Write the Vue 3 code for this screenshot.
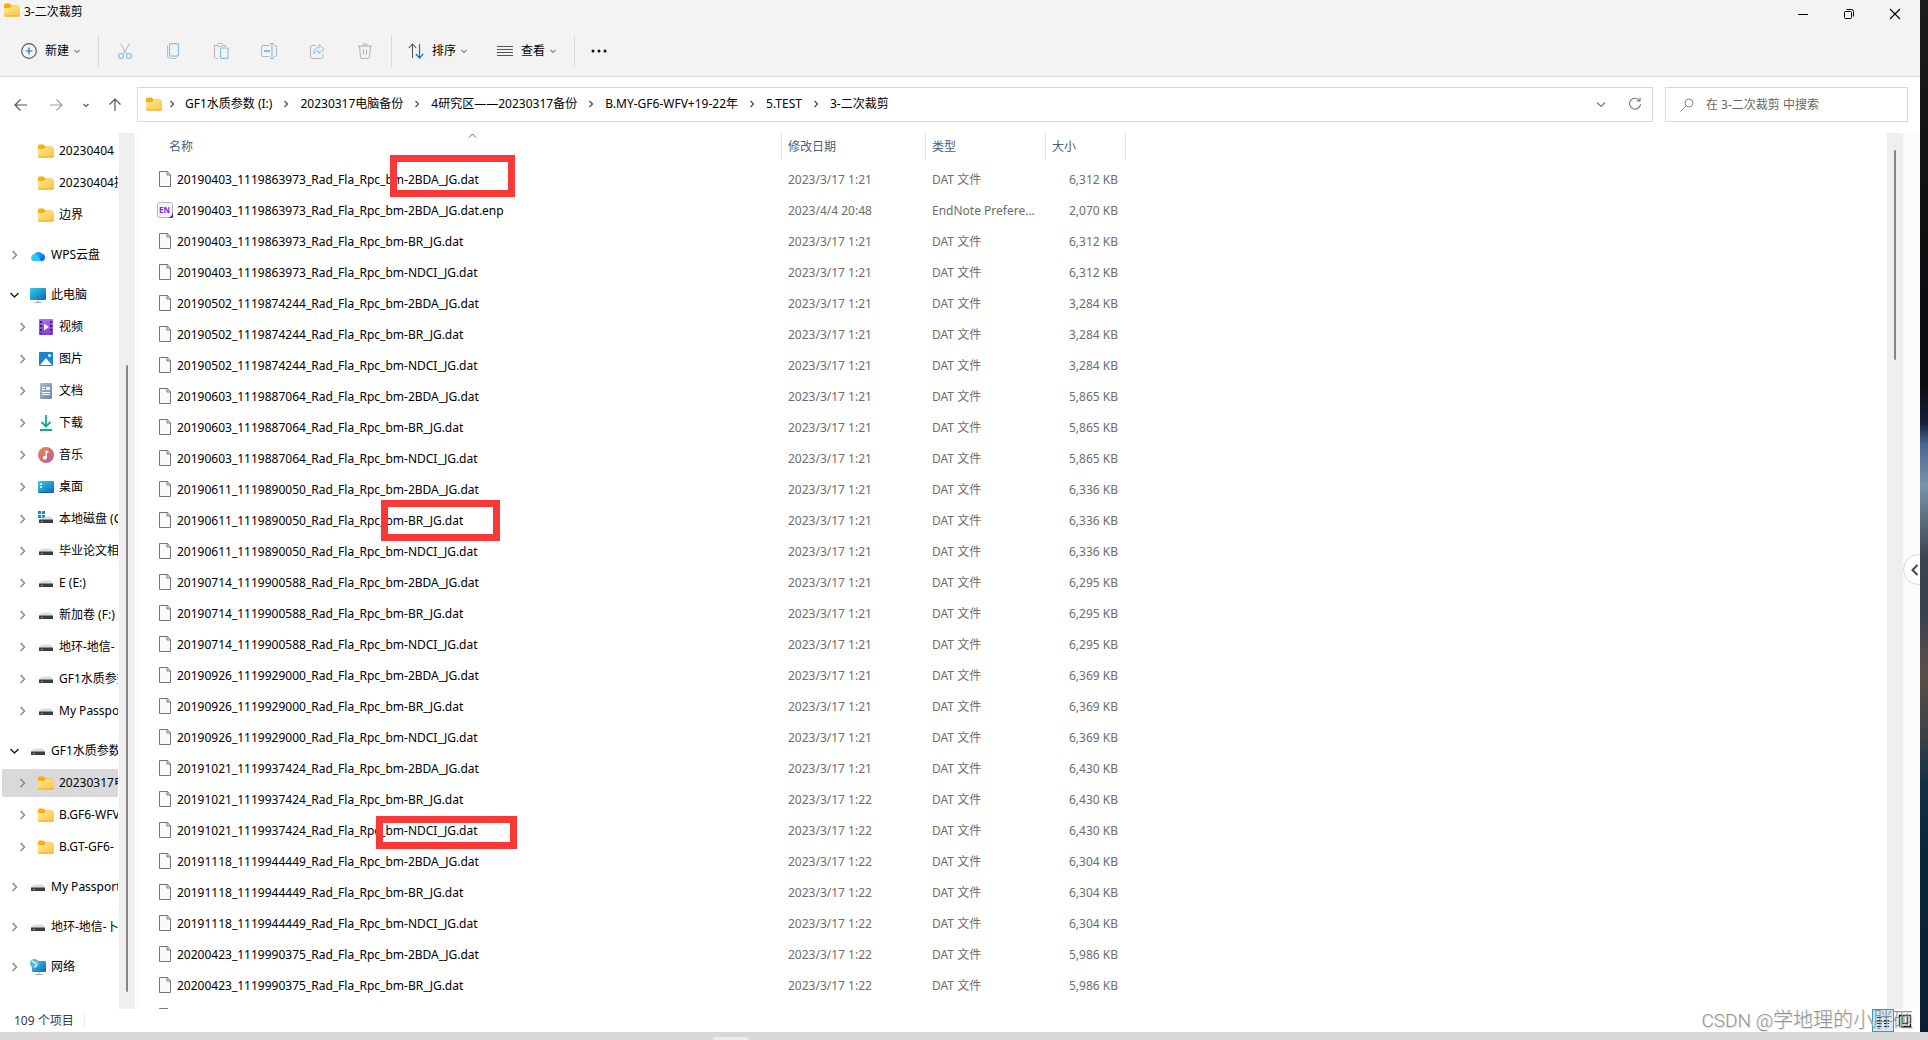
<script setup>
import { ref } from 'vue'

const search = ref('')

const tools = [
  { icon: 'cut', label: '剪切' },
  { icon: 'copy', label: '复制' },
  { icon: 'paste', label: '粘贴' },
  { icon: 'rename', label: '重命名' },
  { icon: 'share', label: '共享' },
  { icon: 'trash', label: '删除' }
]

const crumbs = [
  'GF1水质参数 (I:)',
  '20230317电脑备份',
  '4研究区——20230317备份',
  'B.MY-GF6-WFV+19-22年',
  '5.TEST',
  '3-二次裁剪'
]

const tree = [
  [
    { label: '20230404', icon: 'folder', child: true },
    { label: '20230404提取', icon: 'folder', child: true },
    { label: '边界', icon: 'folder', child: true }
  ],
  [{ label: 'WPS云盘', icon: 'cloud', arrow: 'right' }],
  [
    { label: '此电脑', icon: 'pc', arrow: 'down' },
    { label: '视频', icon: 'video', child: true, arrow: 'right' },
    { label: '图片', icon: 'picture', child: true, arrow: 'right' },
    { label: '文档', icon: 'doc', child: true, arrow: 'right' },
    { label: '下载', icon: 'download', child: true, arrow: 'right' },
    { label: '音乐', icon: 'music', child: true, arrow: 'right' },
    { label: '桌面', icon: 'desktop', child: true, arrow: 'right' },
    { label: '本地磁盘 (C:)', icon: 'sysdrive', child: true, arrow: 'right' },
    { label: '毕业论文相关', icon: 'drive', child: true, arrow: 'right' },
    { label: 'E (E:)', icon: 'drive', child: true, arrow: 'right' },
    { label: '新加卷 (F:)', icon: 'drive', child: true, arrow: 'right' },
    { label: '地环-地信-', icon: 'drive', child: true, arrow: 'right' },
    { label: 'GF1水质参数 (I:)', icon: 'drive', child: true, arrow: 'right' },
    { label: 'My Passport', icon: 'drive', child: true, arrow: 'right' }
  ],
  [
    { label: 'GF1水质参数 (I:)', icon: 'drive', arrow: 'down' },
    { label: '20230317电脑备份', icon: 'folder', child: true, arrow: 'right', selected: true },
    { label: 'B.GF6-WFV', icon: 'folder', child: true, arrow: 'right' },
    { label: 'B.GT-GF6-', icon: 'folder', child: true, arrow: 'right' }
  ],
  [{ label: 'My Passport', icon: 'drive', arrow: 'right' }],
  [{ label: '地环-地信-卜', icon: 'drive', arrow: 'right' }],
  [{ label: '网络', icon: 'network', arrow: 'right' }]
]

const scenes = [
  ['20190403_1119863973', '6,312'],
  ['20190502_1119874244', '3,284'],
  ['20190603_1119887064', '5,865'],
  ['20190611_1119890050', '6,336'],
  ['20190714_1119900588', '6,295'],
  ['20190926_1119929000', '6,369'],
  ['20191021_1119937424', '6,430'],
  ['20191118_1119944449', '6,304'],
  ['20200423_1119990375', '5,986']
]

const files = scenes
  .flatMap(([scene, kb]) =>
    ['2BDA', 'BR', 'NDCI'].map((band) => ({
      name: `${scene}_Rad_Fla_Rpc_bm-${band}_JG.dat`,
      date: '2023/3/17 1:21',
      type: 'DAT 文件',
      size: `${kb} KB`
    }))
  )
  .slice(0, 26)
files.splice(1, 0, {
  name: '20190403_1119863973_Rad_Fla_Rpc_bm-2BDA_JG.dat.enp',
  endnote: true,
  date: '2023/4/4 20:48',
  type: 'EndNote Preference',
  size: '2,070 KB'
})
files.forEach((f, i) => {
  if (i >= 20) f.date = '2023/3/17 1:22'
})
</script>

<template>
  <div class="screen">
    <svg class="defs" width="0" height="0" aria-hidden="true">
      <defs>
        <linearGradient id="gFolder" x1="0" y1="0" x2="1" y2="1">
          <stop offset="0" stop-color="#ffe49a" /><stop offset="1" stop-color="#ffc83a" />
        </linearGradient>
        <linearGradient id="gScreen" x1="0" y1="0" x2="1" y2="1">
          <stop offset="0" stop-color="#35d0e8" /><stop offset="1" stop-color="#0b66b8" />
        </linearGradient>
        <linearGradient id="gVideo" x1="0" y1="0" x2="0" y2="1">
          <stop offset="0" stop-color="#b36af0" /><stop offset="1" stop-color="#7b3fd6" />
        </linearGradient>
        <linearGradient id="gDoc" x1="0" y1="0" x2="1" y2="1">
          <stop offset="0" stop-color="#a9bdd4" /><stop offset="1" stop-color="#6884a6" />
        </linearGradient>
        <linearGradient id="gMusic" x1="0" y1="0" x2="1" y2="1">
          <stop offset="0" stop-color="#f0884a" /><stop offset="1" stop-color="#b45aa0" />
        </linearGradient>
        <linearGradient id="gCloud" x1="0" y1="0" x2="1" y2="1">
          <stop offset="0" stop-color="#2bd0f5" /><stop offset="1" stop-color="#0a4fe0" />
        </linearGradient>
      </defs>
      <symbol id="folder" viewBox="0 0 16 16">
        <path d="M0 3a1.500 1.500 0 0 1 1.500-1.500h4L7.500 3.500H14v4H0z" fill="#f5ad0c" />
        <path d="M0 6h6l1.500-2H15a1 1 0 0 1 1 1v8.500a1 1 0 0 1-1 1H1a1 1 0 0 1-1-1z" fill="url(#gFolder)" />
        <path d="M.5 14h15" stroke="#eda41c" />
      </symbol>
      <symbol id="cloud" viewBox="0 0 16 16">
        <path d="M4.500 14a3.300 3.300 0 0 1-.6-6.500A5 5 0 0 1 12 6.500 3.900 3.900 0 0 1 12.500 14z" fill="url(#gCloud)" />
        <path d="M4.500 14a3.300 3.300 0 0 1-.6-6.500C7 7 9 9 11 14z" fill="#25cdf2" />
      </symbol>
      <symbol id="pc" viewBox="0 0 16 16">
        <rect y="1" width="16" height="12" rx="1" fill="url(#gScreen)" />
        <path d="M8 13v2.500M4.500 15.500h7" stroke="#9aa7b3" />
      </symbol>
      <symbol id="video" viewBox="0 0 16 16">
        <rect x="1" width="14" height="16" rx="1" fill="url(#gVideo)" />
        <path d="M3 2v13M13 2v13" stroke="#3f1f7a" stroke-width="2" stroke-dasharray="2 2" />
        <path d="M6 4.500v7l5-3.500z" fill="#fff" />
      </symbol>
      <symbol id="picture" viewBox="0 0 16 16">
        <rect x="1" y="1" width="14" height="14" rx="1" fill="#1585d8" />
        <path d="M2 14l6-7 6 7z" fill="#fff" /><circle cx="11.500" cy="4.500" r="1.500" fill="#fff" />
      </symbol>
      <symbol id="doc" viewBox="0 0 16 16">
        <rect x="2" width="12" height="16" rx="1" fill="url(#gDoc)" />
        <path d="M4 4.500h3M4 6.500h3M4 9.500h8M4 11.500h8" stroke="#fff" /><rect x="8" y="4" width="4" height="3" fill="#fff" />
      </symbol>
      <symbol id="download" viewBox="0 0 16 16">
        <path d="M8 0v11M3.500 7L8 11.500 12.500 7M2 15h12" fill="none" stroke="#12a88a" stroke-width="1.800" />
      </symbol>
      <symbol id="music" viewBox="0 0 16 16">
        <circle cx="8" cy="8" r="8" fill="url(#gMusic)" />
        <circle cx="6.700" cy="10.700" r="2" fill="#fff" /><path d="M8.200 11V3.500c.5 1.500 1.500 1.500 2.300 2" fill="none" stroke="#fff" stroke-width="1.300" />
      </symbol>
      <symbol id="desktop" viewBox="0 0 16 16">
        <rect y="2" width="16" height="12" rx="1" fill="url(#gScreen)" />
        <path d="M2 5h2M2 8h2" stroke="#fff" stroke-width="1.600" /><path d="M1 13.500h14" stroke="#0c4f8c" stroke-dasharray="10 1 1 1" />
      </symbol>
      <symbol id="drive" viewBox="0 0 16 16">
        <path d="M3.500 5.500h9L15 9H1z" fill="#dcdfe2" /><rect x="1" y="8.500" width="14" height="3.500" fill="#3d4043" />
        <rect x="3" y="10" width="1.500" height="1" fill="#3be35b" />
      </symbol>
      <symbol id="sysdrive" viewBox="0 0 16 16">
        <path d="M0 0h3v3H0zM4 0h3v3H4zM0 4h3v3H0zM4 4h3v3H4z" fill="#1686d6" />
        <path d="M8 5.500h5L15 9H1z" fill="#dcdfe2" /><rect x="1" y="8.500" width="14" height="3.500" fill="#3d4043" />
        <rect x="3" y="10" width="1.500" height="1" fill="#3be35b" />
      </symbol>
      <symbol id="network" viewBox="0 0 16 16">
        <rect x="2" y="2" width="14" height="11" rx="1" fill="url(#gScreen)" />
        <path d="M9 13v2.500M5.500 15.500h7" stroke="#9aa7b3" />
        <circle cx="4.500" cy="4.500" r="4.500" fill="#5fb4dc" /><path d="M1.500 2c2 0 2 2 4 2s1 3-1 4" fill="none" stroke="#d5edf7" stroke-width="1.500" />
      </symbol>
      <symbol id="file" viewBox="0 0 16 16">
        <path d="M2.500.5h8l3 3.500v11.500h-11z" fill="#fafafa" stroke="#757575" /><path d="M10 .5V4h3.500" fill="none" stroke="#757575" />
      </symbol>
      <symbol id="right" viewBox="0 0 16 16"><path d="M6.500 4l4 4-4 4" fill="none" stroke="#8a8a8a" stroke-width="1.500" /></symbol>
      <symbol id="down" viewBox="0 0 16 16"><path d="M4.500 6l4 4 4-4" fill="none" stroke="#222" stroke-width="1.500" /></symbol>
      <symbol id="crumb" viewBox="0 0 16 16"><path d="M6.500 5l3 3-3 3" fill="none" stroke="#555" stroke-width="1.400" /></symbol>
      <symbol id="chev" viewBox="0 0 16 16"><path d="M5.500 7L8 9.500 10.500 7" fill="none" stroke="currentColor" stroke-width="1.200" /></symbol>
      <symbol id="chevWide" viewBox="0 0 16 16"><path d="M4 6.500l4 4 4-4" fill="none" stroke="#777" stroke-width="1.100" /></symbol>
      <symbol id="plus" viewBox="0 0 16 16">
        <circle cx="8" cy="8" r="7.300" fill="none" stroke="#5c5c5c" stroke-width="1.200" /><path d="M8 4.500v7M4.500 8h7" stroke="#1474c4" stroke-width="1.200" />
      </symbol>
      <symbol id="cut" viewBox="0 0 16 16">
        <path d="M3.500.5l6.500 11M12.500.5L6 11.500" stroke="#b4b4b4" />
        <circle cx="4" cy="13" r="2.500" fill="none" stroke="#86bfe6" stroke-width="1.200" /><circle cx="12" cy="13" r="2.500" fill="none" stroke="#86bfe6" stroke-width="1.200" />
      </symbol>
      <symbol id="copy" viewBox="0 0 16 16">
        <path d="M2.500 2.500v10a3 3 0 0 0 3 3h6" fill="none" stroke="#b8b8b8" /><rect x="4.500" y=".6" width="9" height="12.500" rx="1.500" fill="#f3f3f3" stroke="#86bfe6" stroke-width="1.200" />
      </symbol>
      <symbol id="paste" viewBox="0 0 16 16">
        <path d="M5 15.500H2.500a1 1 0 0 1-1-1v-12h3M9.500 2.500h3V4" fill="none" stroke="#b4b4b4" /><rect x="4.500" y=".5" width="5" height="3" rx="1" fill="none" stroke="#b4b4b4" />
        <rect x="7.500" y="5" width="7.500" height="10.400" rx="1" fill="none" stroke="#86bfe6" stroke-width="1.200" />
      </symbol>
      <symbol id="rename" viewBox="0 0 16 16">
        <path d="M9 2.500H2a1.500 1.500 0 0 0-1.500 1.500v8a1.500 1.500 0 0 0 1.500 1.500h7M13 2.500h1a1.500 1.500 0 0 1 1.500 1.500v8a1.500 1.500 0 0 1-1.500 1.500h-1" fill="none" stroke="#b4b4b4" />
        <path d="M11 .5v15M9 .5h4M9 15.500h4" stroke="#86bfe6" stroke-width="1.200" /><path d="M3 8h6" stroke="#7fbce6" stroke-width="2" />
      </symbol>
      <symbol id="share" viewBox="0 0 16 16">
        <path d="M7 2.500H3A1.500 1.500 0 0 0 1.500 4v10A1.500 1.500 0 0 0 3 15.500h9.500A1.500 1.500 0 0 0 14 14v-3" fill="none" stroke="#b4b4b4" />
        <path d="M10 1.500l5 4.500-5 4.500V8C7.500 8 6 9 4.500 11c0-4 2-6.500 5.500-6.500z" fill="#eaf3fa" stroke="#86bfe6" stroke-linejoin="round" />
      </symbol>
      <symbol id="trash" viewBox="0 0 16 16">
        <path d="M1 3h14M6 3V2a1 1 0 0 1 1-1h2a1 1 0 0 1 1 1v1M2.500 3l1 11a1.500 1.500 0 0 0 1.500 1.500h6a1.500 1.500 0 0 0 1.500-1.500l1-11M6.500 6.500v5M9.500 6.500v5" fill="none" stroke="#b0b0b0" />
      </symbol>
      <symbol id="sort" viewBox="0 0 16 16">
        <path d="M4.500 15V1.500M.8 5l3.700-4 3.700 4" fill="none" stroke="#555" stroke-width="1.100" /><path d="M11.500 1v13.500M7.800 11l3.700 4 3.700-4" fill="none" stroke="#1474c4" stroke-width="1.200" />
      </symbol>
      <symbol id="lines" viewBox="0 0 16 16"><path d="M0 3.500h16M0 6.500h16M0 9.500h16M0 12.500h16" stroke="#555" /></symbol>
      <symbol id="dots" viewBox="0 0 16 16"><circle cx="2" cy="8" r="1.500" /><circle cx="8" cy="8" r="1.500" /><circle cx="14" cy="8" r="1.500" /></symbol>
      <symbol id="back" viewBox="0 0 16 16"><path d="M14 8H2.500M7.500 2.500L2 8l5.500 5.500" fill="none" stroke="#555" stroke-width="1.200" /></symbol>
      <symbol id="forward" viewBox="0 0 16 16"><path d="M2 8h11.500M8.500 2.500L14 8l-5.500 5.500" fill="none" stroke="#a0a0a0" stroke-width="1.200" /></symbol>
      <symbol id="up" viewBox="0 0 16 16"><path d="M8 14V2.500M2.500 7.500L8 2l5.500 5.500" fill="none" stroke="#555" stroke-width="1.200" /></symbol>
      <symbol id="refresh" viewBox="0 0 16 16"><path d="M12.500 4.500A5.500 5.500 0 1 0 13.500 8M13 1.500V5H9.500" fill="none" stroke="#777" stroke-width="1.100" /></symbol>
      <symbol id="lens" viewBox="0 0 16 16"><circle cx="10" cy="6" r="4" fill="none" stroke="#8c8690" /><path d="M7 9l-5.500 5.500" stroke="#8c8690" /></symbol>
      <symbol id="min" viewBox="0 0 16 16"><path d="M3 8.500h10" stroke="#000" /></symbol>
      <symbol id="restore" viewBox="0 0 16 16">
        <rect x="3.500" y="5.500" width="7" height="7" rx="1" fill="none" stroke="#000" /><path d="M5.500 3.500h5a2 2 0 0 1 2 2v5" fill="none" stroke="#000" />
      </symbol>
      <symbol id="close" viewBox="0 0 16 16"><path d="M3 3l10 10M13 3L3 13" stroke="#000" stroke-width="1.100" /></symbol>
    </svg>

    <div class="window">
      <header class="top">
        <div class="titlebar">
          <svg class="ic"><use href="#folder" /></svg>
          <h1>3-二次裁剪</h1>
          <div class="winbtns">
            <button aria-label="最小化"><svg class="ic"><use href="#min" /></svg></button>
            <button aria-label="还原"><svg class="ic"><use href="#restore" /></svg></button>
            <button aria-label="关闭"><svg class="ic"><use href="#close" /></svg></button>
          </div>
        </div>
        <div class="toolbar">
          <button class="labelled"><svg class="ic"><use href="#plus" /></svg><span>新建</span><svg class="ic chev"><use href="#chev" /></svg></button>
          <i class="sep"></i>
          <div class="tools">
            <button v-for="t in tools" :key="t.icon" :aria-label="t.label" disabled>
              <svg class="ic"><use :href="'#' + t.icon" /></svg>
            </button>
          </div>
          <i class="sep"></i>
          <button class="labelled"><svg class="ic"><use href="#sort" /></svg><span>排序</span><svg class="ic chev"><use href="#chev" /></svg></button>
          <button class="labelled"><svg class="ic"><use href="#lines" /></svg><span>查看</span><svg class="ic chev"><use href="#chev" /></svg></button>
          <i class="sep"></i>
          <button class="more" aria-label="更多"><svg class="ic"><use href="#dots" /></svg></button>
        </div>
      </header>

      <div class="navrow">
        <div class="arrows">
          <button aria-label="后退"><svg class="ic"><use href="#back" /></svg></button>
          <button aria-label="前进"><svg class="ic"><use href="#forward" /></svg></button>
          <button class="recent" aria-label="最近"><svg class="ic"><use href="#chev" /></svg></button>
          <button aria-label="向上"><svg class="ic"><use href="#up" /></svg></button>
        </div>
        <div class="address">
          <svg class="ic"><use href="#folder" /></svg>
          <template v-for="(c, i) in crumbs" :key="c">
            <svg class="ic crumbsep" :class="{ first: i === 0 }"><use href="#crumb" /></svg>
            <button>{{ c }}</button>
          </template>
          <div class="addrend">
            <button aria-label="历史"><svg class="ic"><use href="#chevWide" /></svg></button>
            <button aria-label="刷新"><svg class="ic"><use href="#refresh" /></svg></button>
          </div>
        </div>
        <label class="search">
          <svg class="ic"><use href="#lens" /></svg>
          <input v-model="search" type="text" aria-label="搜索" placeholder="在 3-二次裁剪 中搜索" />
        </label>
      </div>

      <div class="main">
        <nav class="side">
          <ul v-for="(g, gi) in tree" :key="gi">
            <li v-for="(n, ni) in g" :key="ni">
              <a href="#" :class="{ child: n.child, selected: n.selected }">
                <svg class="ic"><use v-if="n.arrow" :href="'#' + n.arrow" /></svg>
                <svg class="ic"><use :href="'#' + n.icon" /></svg>
                <span>{{ n.label }}</span>
              </a>
            </li>
          </ul>
        </nav>
        <div class="track"><div class="thumb sidethumb"></div></div>

        <main class="list">
          <table>
            <colgroup><col class="cname" /><col class="cdate" /><col class="ctype" /><col class="csize" /></colgroup>
            <thead>
              <tr>
                <th class="name">名称<svg class="sortmark" viewBox="0 0 8 5"><path d="M.5 4.500L4 1l3.500 3.500" fill="none" stroke="#666" /></svg></th>
                <th>修改日期</th><th>类型</th><th>大小</th>
              </tr>
            </thead>
            <tbody>
              <tr v-for="f in files" :key="f.name">
                <td class="name">
                  <div class="file">
                    <svg v-if="f.endnote" class="ic" viewBox="0 0 16 16">
                      <rect x=".5" y=".5" width="15" height="15" rx="2" fill="#f5f3fa" stroke="#b9b5c4" />
                      <path d="M10 16c3 0 5-2 6-6v5l-1 1z" fill="#4a1fa0" />
                      <text x="2" y="10.500" class="en">EN</text>
                    </svg>
                    <svg v-else class="ic"><use href="#file" /></svg>
                    <span>{{ f.name }}</span>
                  </div>
                </td>
                <td>{{ f.date }}</td>
                <td>{{ f.type }}</td>
                <td class="size">{{ f.size }}</td>
              </tr>
              <tr>
                <td class="name"><div class="file"><svg class="ic"><use href="#file" /></svg></div></td>
                <td></td><td></td><td></td>
              </tr>
            </tbody>
          </table>
          <div class="mark mark-bda"></div>
          <div class="mark mark-br"></div>
          <div class="mark mark-ndci"></div>
        </main>
        <div class="track"><div class="thumb listthumb"></div></div>
        <div class="gutter"><button class="drawer" aria-label="展开"><svg viewBox="0 0 8 12"><path d="M6.500 1L1.500 6l5 5" fill="none" stroke="#444" stroke-width="2" /></svg></button></div>
      </div>

      <footer class="status">
        <span class="count">109 个项目</span>
        <div class="views">
          <button class="on" aria-label="详细信息"><svg width="14" height="14" viewBox="0 0 14 14"><path d="M1 3.500h5M8 3.500h5M1 6.500h5M8 6.500h5M1 9.500h5M8 9.500h5M1 12.500h5M8 12.500h5" stroke="#222" /></svg></button>
          <button aria-label="大图标"><svg width="14" height="14" viewBox="0 0 14 14"><path d="M1.500 1.500h11v11h-11zM4.500 2v7.500h5V2" fill="none" stroke="#111" stroke-width="1.400" /></svg></button>
        </div>
        <div class="watermark"><span>CSDN @</span>学地理的小胖砸</div>
      </footer>
    </div>
    <div class="wallpaper"></div>
    <div class="taskbar"><i></i></div>
  </div>
</template>

<style>
body { margin: 0; overflow: hidden; }
</style>

<style scoped>
.screen {
  display: grid;
  grid-template: minmax(0, 1fr) 8px / minmax(0, 1fr) 8px;
  height: 100vh;
  font: 12px/16px "Noto Sans", "Noto Sans CJK SC", sans-serif;
  color: #000;
  background: #fff;
}
.defs { position: absolute; }
.ic { width: 16px; height: 16px; flex: none; display: block; }
.en { font: 700 8px "Open Sans", sans-serif; fill: #6d2de0; }
button { font: inherit; color: inherit; background: none; border: 0; padding: 0; margin: 0; display: flex; align-items: center; justify-content: center; white-space: nowrap; }
ul { list-style: none; margin: 0; padding: 0; }
.window { display: flex; flex-direction: column; min-width: 0; min-height: 0; }

.top { background: #f3f3f3; border-bottom: 1px solid #dedede; }
.titlebar { display: flex; align-items: flex-start; height: 28px; padding: 0 2px 0 4px; }
.titlebar > .ic { margin: 2px 4px 0 0; }
h1 { font: inherit; margin: 4px 0 0; }
.winbtns { display: flex; margin-left: auto; }
.winbtns button { width: 46px; height: 28px; }
.toolbar { display: flex; align-items: center; height: 45px; padding: 0 0 3px 21px; }
.labelled span { margin: 0 0 0 8px; }
.chev { color: #888; }
.labelled + .labelled { margin-left: 25px; }
.sep { width: 1px; height: 32px; background: #dcdcdc; margin: 0 16px 0 13px; }
.tools { display: flex; gap: 32px; padding: 0 5px 0 2px; }
.more .ic { fill: #111; }

.navrow { display: flex; align-items: center; padding: 10px 12px 11px 13px; }
.arrows { display: flex; align-items: center; width: 124px; flex: none; }
.arrows button { margin-right: 19px; }
.arrows .recent { margin: 0 13px 0 -5px; color: #555; }
.address { flex: 1; min-width: 0; display: flex; align-items: center; height: 31px; border: 1px solid #d9d9d9; padding: 0 9px 2px 8px; }
.crumbsep { margin: 0 6px; }
.crumbsep.first { margin: 0 5px 0 2px; }
.addrend { display: flex; gap: 18px; margin-left: auto; }
.search { flex: none; display: flex; align-items: center; gap: 11px; box-sizing: border-box; width: 243px; height: 35px; margin-left: 12px; border: 1px solid #d9d9d9; padding: 0 8px 0 13px; }
.search input { flex: 1; min-width: 0; border: 0; outline: 0; padding: 0; font: inherit; }
.search input::placeholder { color: #666; opacity: 1; }

.main { flex: 1; min-height: 0; display: flex; }
.side { width: 118px; flex: none; overflow: hidden; margin-right: 1px; }
.side ul { padding-bottom: 8px; }
.side ul:first-child { padding-top: 2px; }
.side li { padding: 2px 0 2px 2px; }
.side a { display: flex; align-items: center; height: 28px; padding-left: 4px; color: #000; text-decoration: none; white-space: nowrap; overflow: hidden; }
.side a.child { padding-left: 12px; }
.side a .ic + .ic { margin: 0 5px 0 8px; }
.side a.selected { background: #d9d9d9; border-radius: 2px 0 0 2px; }
.track { flex: none; width: 16px; background: #efefef; display: flex; flex-direction: column; align-items: center; }
.thumb { width: 2px; border-radius: 1px; background: #858585; }
.sidethumb { margin-top: 232px; height: calc(100% - 249px); }
.listthumb { margin-top: 17px; height: 24%; }

.list { flex: 1; min-width: 0; position: relative; overflow: hidden; margin-left: 2px; border-left: 1px solid #f3f3f3; }
table { table-layout: fixed; width: 988px; border-collapse: separate; border-spacing: 0; }
.cname { width: 644px; }
.cdate { width: 144px; }
.ctype { width: 120px; }
.csize { width: 80px; }
th { height: 27px; padding: 0 0 0 6px; text-align: left; font-weight: 400; color: #4c607a; border-right: 1px solid #e2e2e2; }
th.name { position: relative; padding-left: 31px; }
.sortmark { position: absolute; left: 330px; top: 0; width: 9px; height: 5px; }
tbody tr:first-child td { padding-top: 4px; }
td { height: 31px; padding: 0 0 0 6px; color: #6d6d6d; white-space: nowrap; overflow: hidden; text-overflow: ellipsis; }
td:nth-child(3) { padding-right: 8px; }
td.name { padding-left: 19px; color: #000; }
td.size { text-align: right; padding: 0 8px 0 0; }
.file { display: flex; align-items: flex-start; gap: 4px; height: 17px; }
.file span { margin-top: 1px; }
.mark { position: absolute; box-sizing: border-box; border: 7px solid #fb3838; }
.mark-bda { left: 252px; top: 22px; width: 125px; height: 42px; }
.mark-br { left: 243px; top: 367px; width: 119px; height: 41px; }
.mark-ndci { left: 238px; top: 683px; width: 141px; height: 33px; }

.gutter { flex: none; width: 17px; background: #fbfbfb; position: relative; overflow: hidden; }
.drawer { position: absolute; left: 0; top: 421px; width: 31px; height: 31px; border: 1px solid #cfd9ea; border-radius: 50%; background: #fff; justify-content: flex-start; padding-left: 7px; }
.drawer svg { width: 8px; height: 12px; }

.status { flex: none; display: flex; align-items: center; height: 23px; padding: 0 4px 0 14px; position: relative; color: #2b3a5c; }
.count { padding-right: 10px; border-right: 1px solid #ececec; line-height: 14px; }
.views { display: flex; margin-left: auto; }
.views button { width: 22px; height: 23px; border: 1px solid transparent; }
.views .on { background: #cfe8f6; border-color: #2a9bd6; }
.watermark { position: absolute; right: 7px; bottom: -1px; font: 300 20px/24px Roboto, "Noto Sans CJK SC", sans-serif; color: #777; opacity: 0.8; pointer-events: none; white-space: nowrap; text-shadow: 1px 1px 0 #ddd; }
.watermark span { font-size: 19px; }

.wallpaper { background: linear-gradient(#1b1c1b 0, #120f12 20%, #0c0a10 37%, #17203a 41%, #4a658c 43%, #7b94ab 47%, #5f727f 50%, #3a4450 54%, #39404d 59%, #5a504b 65%, #3f4244 71%, #122f45 76%, #0a2536 83%, #0c1f30 100%); }
.taskbar { grid-column: 1 / -1; background: #d8d8d8; display: flex; align-items: flex-end; }
.taskbar i { width: 36px; height: 3px; margin-left: 37%; background: #ececec; border-radius: 3px 3px 0 0; }
</style>
